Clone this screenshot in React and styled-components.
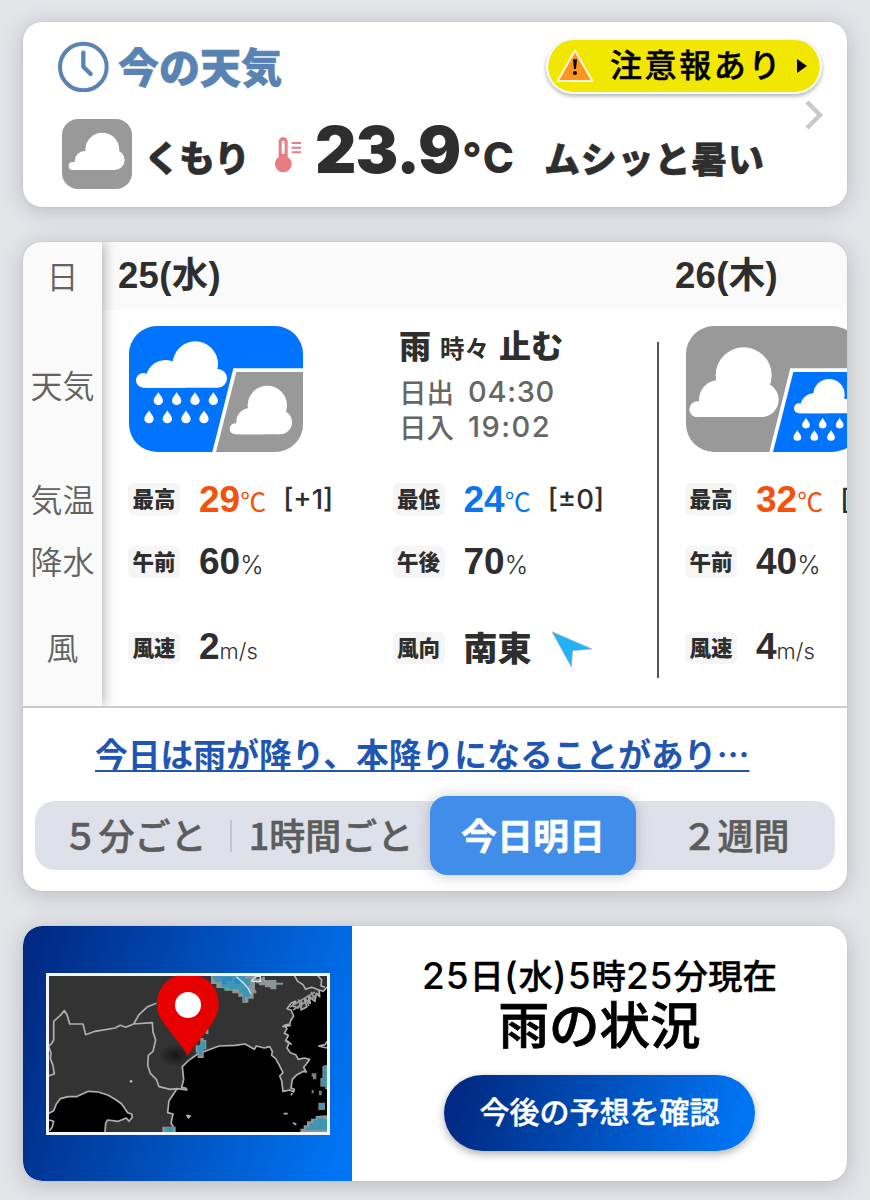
import React from "react";
import styled, { createGlobalStyle } from "styled-components";

const GlobalStyle = createGlobalStyle`
  * {
    box-sizing: border-box;
  }
  body {
    margin: 0;
    background-color: #e4e5e9;
    font-family: "Noto Sans CJK JP", sans-serif;
    color: #2e2e2e;
    line-height: 1;
  }
`;

const Page = styled.div`
  width: 870px;
  height: 1200px;
  padding: 22px 23px 0;
  display: flex;
  flex-direction: column;
  gap: 35px;
  overflow: hidden;
`;

const Card = styled.section`
  height: ${(props) => props.$height}px;
  flex-shrink: 0;
  background-color: white;
  border-radius: 19px;
  box-shadow: 0 3px 22px rgb(60 62 70 / 26%), 0 0 2px rgb(60 62 70 / 14%);
`;

/* current weather */

const NowTop = styled.div`
  height: 97px;
  padding: 18px 25px 0 35px;
  display: flex;
  align-items: flex-start;
`;

const NowTitle = styled.h1`
  margin: 5px 0 0 8px;
  flex: 1;
  font-size: 41px;
  font-weight: 900;
  line-height: 41px;
  color: #5983b3;
  -webkit-text-stroke: 0.6px #5983b3;
`;

const AlertButton = styled.button`
  width: 276px;
  height: 54px;
  padding: 0 13px 0 8px;
  display: flex;
  align-items: center;
  border: 2px solid white;
  border-top-width: 0;
  border-radius: 27px;
  background-color: #f2e700;
  background-clip: padding-box;
  box-shadow: 0 2px 4px rgb(0 0 0 / 32%);
  font-family: inherit;
  font-size: 32px;
  font-weight: 500;
  line-height: 1;
  letter-spacing: 2.6px;
  color: black;
  -webkit-text-stroke: 0.5px black;
`;

const AlertText = styled.span`
  margin: -6px 0 0 16px;
  flex: 1;
  text-align: left;
  white-space: nowrap;
`;

const NowBottom = styled.div`
  height: 70px;
  padding-left: 39px;
  display: flex;
  align-items: flex-start;
`;

const NowWord = styled.span`
  margin: ${(props) => props.$margin};
  font-size: 36px;
  font-weight: 900;
  letter-spacing: ${(props) => props.$spacing}px;
  white-space: nowrap;
  -webkit-text-stroke: 0.5px #2e2e2e;
`;

const NowTemp = styled.span`
  width: 232px;
  margin: -1px 0 0 13px;
  font-family: Inter, sans-serif;
  font-size: 64px;
  font-weight: 900;
  letter-spacing: -0.9px;
  white-space: nowrap;
  small {
    margin-left: 2px;
    font-size: 42px;
    font-weight: 800;
    letter-spacing: 2px;
  }
`;

const Thermometer = styled.svg`
  margin: 18px 0 0 26px;
`;

const Chevron = styled.svg`
  margin: -19px 23px 0 auto;
`;

/* forecast */

const Forecast = styled.div`
  height: 466px;
  display: flex;
  overflow: hidden;
  border-bottom: 2px solid #cbcbcb;
  border-radius: 19px 19px 0 0;
`;

const Labels = styled.div`
  width: 79px;
  flex-shrink: 0;
  position: relative;
  z-index: 1;
  background-color: #fafafa;
  box-shadow: 2px 0 12px rgb(0 0 0 / 30%);
`;

const Label = styled.div`
  height: ${(props) => props.$height}px;
  padding-bottom: ${(props) => props.$lift}px;
  display: flex;
  align-items: center;
  justify-content: center;
  font-size: 32px;
  font-weight: 350;
  color: #626262;
`;

const Days = styled.div`
  flex: 1;
  display: flex;
  overflow: hidden;
`;

const DayColumn = styled.div`
  width: 557px;
  flex-shrink: 0;
`;

const DayTitle = styled.h2`
  height: 68px;
  margin: 0;
  padding: 16px 0 0 16px;
  background-color: #fafafa;
  font-family: "Liberation Sans", "Noto Sans CJK JP", sans-serif;
  font-size: 36.5px;
  font-weight: 700;
  letter-spacing: 0.3px;
`;

const DayBody = styled.div`
  height: 396px;
  display: flex;
`;

const DayContent = styled.div`
  width: 555px;
  padding-left: 26px;
`;

const DayLine = styled.div`
  width: 2px;
  margin: 32px 0 28px;
  background-color: #555;
`;

const Overview = styled.div`
  height: 158px;
  padding: 16px 0 0 1px;
  display: flex;
`;

const Summary = styled.div`
  margin-left: 96px;
`;

const Telop = styled.div`
  height: 48px;
  padding-top: 2px;
  font-size: 32px;
  font-weight: 900;
  white-space: nowrap;
  small {
    margin: 0 10px 0 9px;
    font-size: 24.5px;
    font-weight: 700;
  }
`;

const SunTime = styled.div`
  height: 35px;
  display: flex;
  align-items: center;
  font-size: 27.5px;
  font-weight: 500;
  color: #666;
  span {
    margin-left: 14px;
    font-family: Inter, sans-serif;
    font-size: 29px;
    letter-spacing: ${(props) => props.$spacing}px;
  }
`;

const MetricRow = styled.div`
  height: ${(props) => props.$height}px;
  display: grid;
  grid-template-columns: 264.5px 264.5px;
  align-items: center;
`;

const Metric = styled.div`
  display: flex;
  align-items: center;
`;

const Badge = styled.span`
  width: 52px;
  height: 32px;
  padding-bottom: 2px;
  margin-right: 19px;
  display: flex;
  align-items: center;
  justify-content: center;
  border-radius: 6px;
  background-color: #f5f5f5;
  font-size: 21.5px;
  font-weight: 900;
`;

const Value = styled.span`
  padding-bottom: ${(props) => props.$lift || 0}px;
  font-family: "Liberation Sans", sans-serif;
  font-size: 37px;
  font-weight: 700;
  color: ${(props) => props.$color || "#2e2e2e"};
  white-space: nowrap;
`;

const Unit = styled.span`
  font-family: ${(props) => (props.$degree ? '"Noto Sans CJK JP"' : "Inter")}, sans-serif;
  font-size: ${(props) => props.$size || 22}px;
  font-weight: ${(props) => (props.$degree ? 400 : 300)};
`;

const Diff = styled.span`
  margin: 2px 0 0 17px;
  font-family: Inter, sans-serif;
  font-size: 27.5px;
  font-weight: 500;
`;

const Direction = styled.span`
  margin-right: 19px;
  padding-bottom: 2px;
  font-size: 34px;
  font-weight: 900;
  line-height: 38px;
`;

const Comment = styled.a`
  height: 93px;
  padding-top: 29px;
  display: block;
  margin-left: 72px;
  font-size: 32.7px;
  font-weight: 700;
  letter-spacing: 0.1px;
  color: #1f56b3;
  white-space: nowrap;
  text-decoration: underline;
  text-decoration-thickness: 2px;
  text-underline-offset: 3px;
`;

const Tabs = styled.nav`
  width: 800px;
  height: 69px;
  margin-left: 12px;
  display: grid;
  grid-template-columns: 195px 2px 198px 206px 199px;
  grid-template-rows: 69px;
  align-items: center;
  border-radius: 20px;
  background-color: #dfe1ea;
`;

const Tab = styled.button`
  height: ${(props) => (props.$active ? 79 : 69)}px;
  padding: 0 0 3px ${(props) => props.$shift || 0}px;
  border: none;
  border-radius: 17px;
  background-color: ${(props) => (props.$active ? "#418eea" : "transparent")};
  box-shadow: ${(props) => (props.$active ? "0 1px 14px rgb(60 70 90 / 30%)" : "none")};
  color: ${(props) => (props.$active ? "white" : "#5c5c5c")};
  font-family: inherit;
  font-size: 36px;
  font-weight: ${(props) => (props.$active ? 700 : 500)};
  -webkit-text-stroke: 0.5px currentColor;
  line-height: 1;
  white-space: nowrap;
`;

const TabLine = styled.i`
  width: 2px;
  height: 32px;
  background-color: #c3c5cc;
`;

/* rain map */

const RainCard = styled(Card)`
  display: flex;
  overflow: hidden;
`;

const MapPanel = styled.div`
  width: 329px;
  padding: 47px 0 0 23px;
  border-radius: 19px 0 0 19px;
  background: linear-gradient(105deg, #002a83 4%, #0075f4 96%);
`;

const MapFrame = styled.div`
  width: 284px;
  height: 162px;
  border: 3px solid #f2f6ff;
  svg {
    display: block;
  }
`;

const RainInfo = styled.div`
  flex: 1;
  display: flex;
  flex-direction: column;
  align-items: center;
`;

const RainTime = styled.p`
  height: 38px;
  margin: 29px 0 0;
  font-size: 34.5px;
  font-weight: 500;
  line-height: 38px;
  color: black;
  white-space: nowrap;
  -webkit-text-stroke: 0.3px black;
  span {
    font-family: Inter, sans-serif;
    font-size: 37px;
    letter-spacing: 0.9px;
    -webkit-text-stroke: 0;
  }
`;

const RainTitle = styled.h2`
  margin: 4px 0 0;
  font-size: 50.5px;
  font-weight: 500;
  line-height: 50px;
  color: black;
  -webkit-text-stroke: 0.8px black;
`;

const RainButton = styled.button`
  width: 311px;
  height: 76px;
  margin-top: 28px;
  padding-bottom: 8px;
  border: none;
  border-radius: 38px;
  background: linear-gradient(105deg, #002a83 6%, #0075f4 94%);
  box-shadow: 0 3px 9px rgb(0 0 0 / 32%);
  color: white;
  font-family: inherit;
  font-size: 30px;
  font-weight: 500;
  -webkit-text-stroke: 0.4px white;
`;

/* a cloud is a flat base with round bumps: [cx, cy, r] */
const Cloud = ({ bumps, bottom }) => {
  const first = bumps[0];
  const last = bumps[bumps.length - 1];
  return (
    <g fill="white">
      {bumps.map(([cx, cy, r]) =>
        cy + r > bottom + 1 ? (
          <path key={cx} d={`M${cx - r} ${bottom}V${cy}A${r} ${r} 0 0 1 ${cx + r} ${cy}V${bottom}Z`} />
        ) : (
          <circle key={cx} cx={cx} cy={cy} r={r} />
        )
      )}
      <path
        d={`M${first[0]} ${bottom} V${bottom - first[2] * 1.7} L${bumps[1][0]} ${bumps[1][1]} L${bumps[2][0]} ${bumps[2][1]} L${last[0]} ${last[1]} V${bottom} Z`}
      />
    </g>
  );
};

const Drops = ({ xs, y, scale = 1 }) =>
  xs.map((x) => (
    <path
      key={x}
      fill="white"
      transform={`translate(${x} ${y}) scale(${scale})`}
      d="M0 0C3 8 14 16 14 26A14 13 0 0 1-14 26C-14 16-3 8 0 0Z"
    />
  ));

const RainThenCloud = () => (
  <svg width="174" height="126" viewBox="0 0 522 378">
    <clipPath id="round1">
      <rect width="522" height="378" rx="84" />
    </clipPath>
    <g clipPath="url(#round1)">
      <rect width="522" height="378" fill="#0073ff" />
      <path d="M313 127H522V378H250Z" fill="white" />
      <path d="M322 138H522V378H261Z" fill="#999" />
      <Cloud bottom={185} bumps={[[43, 163, 22], [110, 162, 60], [199, 114, 68], [266, 157, 28]]} />
      <Drops xs={[88, 143, 198, 253]} y={198} />
      <Drops xs={[60, 115, 171, 225]} y={253} />
      <Cloud bottom={325} bumps={[[318, 308, 16], [364, 288, 42], [415, 238, 59], [453, 289, 36]]} />
    </g>
  </svg>
);

const CloudThenRain = () => (
  <svg width="174" height="126" viewBox="0 0 522 378">
    <clipPath id="round2">
      <rect width="522" height="378" rx="84" />
    </clipPath>
    <g clipPath="url(#round2)">
      <rect width="522" height="378" fill="#999" />
      <path d="M313 127H522V378H250Z" fill="white" />
      <path d="M322 138H522V378H261Z" fill="#0073ff" />
      <Cloud bottom={273} bumps={[[34, 250, 24], [99, 222, 60], [173, 148, 84], [226, 221, 52]]} />
      <Cloud bottom={262} bumps={[[339, 247, 15], [384, 243, 41], [429, 206, 47], [476, 240, 22]]} />
      <Drops xs={[360, 410, 461]} y={275} scale={0.83} />
      <Drops xs={[334, 385, 435]} y={312} scale={0.83} />
    </g>
  </svg>
);

const CloudIcon = () => (
  <svg width="70" height="70" viewBox="0 0 210 210">
    <rect width="210" height="210" rx="48" fill="#999" />
    <Cloud bottom={153} bumps={[[32, 141, 12], [68, 126, 30], [121, 92, 51], [158, 123, 30]]} />
  </svg>
);

const ClockIcon = () => (
  <svg width="52" height="52" viewBox="0 0 156 156" fill="none" stroke="#5983b3">
    <circle cx="76" cy="81" r="70" strokeWidth="12" />
    <path d="M76 38V80L98 102" strokeWidth="13" strokeLinecap="round" strokeLinejoin="round" />
  </svg>
);

const WarningIcon = () => (
  <svg width="38" height="34" viewBox="0 0 114 102">
    <path d="M57 5L109 96H5Z" fill="#ff951c" stroke="#fff6dd" strokeWidth="6" strokeLinejoin="round" />
    <path d="M51 31H63L60 60H54Z" fill="black" />
    <circle cx="57" cy="72" r="6" fill="black" />
  </svg>
);

const ThermometerIcon = () => (
  <Thermometer width="27" height="36" viewBox="0 0 81 108">
    <rect x="11" y="1" width="27" height="80" rx="13" fill="#e87c82" />
    <circle cx="25" cy="81" r="25" fill="#e87c82" />
    <rect x="20" y="11" width="9" height="40" rx="4" fill="white" />
    <path d="M50 18H78M50 32H78M50 46H78" stroke="#e87c82" strokeWidth="6" />
  </Thermometer>
);

const RainMap = () => (
  <svg width="278" height="156" viewBox="102 198 834 468">
    <defs>
      <radialGradient id="pinShadow">
        <stop offset="0" stopColor="black" stopOpacity="0.6" />
        <stop offset="1" stopColor="black" stopOpacity="0" />
      </radialGradient>
    </defs>
    <rect x="102" y="198" width="834" height="468" fill="#333" />
    <g stroke="#b0b0b0" strokeWidth="5" strokeLinejoin="round">
      <path
        fill="black"
        d="M470 670L474 648 468 640 474 612 458 608 462 572 478 548 486 536 516 540 512 534 500 532 506 508 502 470 520 452 548 432 580 420 612 408 660 406 690 402 718 418 724 408 748 414 764 410 772 424 770 436 782 446 792 464 804 488 794 498 800 512 804 544 824 540 836 546 838 538 828 534 832 508 846 494 866 484 874 486 866 472 874 462 884 448 868 444 850 448 842 434 826 428 816 414 822 400 812 392 820 376 808 370 816 356 808 346 824 342 828 330 836 318 828 300 816 296 828 280 842 274 832 288 850 294 860 276 858 300 876 290 868 268 886 280 880 258 900 274 904 250 914 260 912 240 924 244 940 228V670Z"
      />
      <path
        fill="black"
        d="M98 612L116 602 124 582 136 566 160 560 184 560 220 544 250 546 280 556 304 570 320 582 338 608 350 612 352 622 342 634 334 624 310 634 278 630 272 640 270 670H98Z"
      />
      <path
        fill="none"
        d="M98 412L110 400 116 390 116 334 136 316 148 302 156 314 164 342 204 342 212 374 240 364 300 354 316 346 332 352 356 342 412 338 414 366 422 390 414 424 400 436 398 466 406 490 424 508 432 530 466 538 486 536M356 342L372 314 398 290 424 280M102 412L108 430 106 446 114 466 118 492 98 498M838 196L848 214 864 224 872 238 890 232 912 240M906 194L920 210 918 228 930 232M102 630L116 634 112 650 104 662M802 350L828 346M816 392L830 404"
      />
      <path d="M516 616L526 618 520 624ZM832 550L828 556M806 611H818M834 638L844 644" fill="#bbb" />
      <path fill="none" stroke="#999" d="M824 292L900 246M834 300L912 250M850 268L862 300M870 262L882 288M888 246L902 272" />
    </g>
    <circle cx="348" cy="514" r="4" fill="#bbb" />
    <g fill="#8c9699">
      <path d="M588 198H724V216H720V240H724V250H716V266H700V278H682V260H670V250H652V242H628V234H604V222H588Z" />
      <path d="M722 206H740V200H750V210H784V218H804V224H784V238H766V232H750V226H732V220H722Z" />
      <path d="M572 358H580V372H572ZM542 406H556V384H566V390H574V418H566V444H548V428H542Z" />
      <path d="M936 464V538H930V530H916V504H922V468ZM890 490H904V508H894V500H890ZM890 540H896V550H890ZM912 542H920V556H912ZM910 578H930V600H910Z" fillOpacity="0.85" />
      <path d="M936 616V666H856V656H866V646H876V634H888V626H902V618ZM442 650H482V666H442Z" />
    </g>
    <path d="M936 394L930 404 910 408 936 414" fill="none" stroke="#b0b0b0" strokeWidth="5" />
    <g fill="#3c96b4">
      <path d="M594 198H690V206H706V226H700V240H706V262H690V272H684V250H672V238H640V230H620V216H600V208H594Z" />
      <path d="M548 408H560V394H570V416H562V438H552V424H548Z" />
      <path d="M936 474V526H922V508H928V474ZM912 582H926V596H912ZM936 626V660H872V652H884V640H896V630H908V624ZM450 652H474V666H450Z" />
    </g>
    <path d="M620 202H650V214H634V222H622ZM660 206H676V222H660Z" fill="#2e86c8" />
    <path d="M626 232H636V238H626ZM672 230H680V240H672Z" fill="#2fae8e" />
    <path d="M664 200L686 220 700 236 708 252M710 212L722 200 736 198 736 214H712Z" fill="none" stroke="#d9e6ea" strokeWidth="4" />
    <ellipse cx="482" cy="436" rx="52" ry="34" fill="url(#pinShadow)" />
    <path d="M518 438C506 412 480 384 454 350C436 328 426 306 426 284C426 226 466 192 518 192S611 226 611 284C611 306 600 328 584 350C560 384 532 412 518 438Z" fill="#e60000" />
    <circle cx="519" cy="285" r="39" fill="white" />
  </svg>
);

const WindArrow = () => (
  <svg width="42" height="42" viewBox="0 0 126 126">
    <path d="M3 14L123 66 65 71 61 120Z" fill="#1fb4f8" stroke="#b9a7ae" strokeWidth="2" />
  </svg>
);

const days = [
  {
    title: "25(水)",
    icon: <RainThenCloud />,
    telop: ["雨", "時々", "止む"],
    sunrise: "04:30",
    sunset: "19:02",
    high: "29",
    highDiff: "[+1]",
    low: "24",
    lowDiff: "[±0]",
    am: "60",
    pm: "70",
    speed: "2",
    direction: "南東",
  },
  {
    title: "26(木)",
    icon: <CloudThenRain />,
    high: "32",
    highDiff: "[",
    am: "40",
    speed: "4",
  },
];

const Day = ({ day }) => (
  <DayColumn>
    <DayTitle>{day.title}</DayTitle>
    <DayBody>
      <DayContent>
        <Overview>
          {day.icon}
          {day.telop && (
            <Summary>
              <Telop>
                {day.telop[0]}
                <small>{day.telop[1]}</small>
                {day.telop[2]}
              </Telop>
              <SunTime $spacing={0.7}>
                日出<span>{day.sunrise}</span>
              </SunTime>
              <SunTime $spacing={1.5}>
                日入<span>{day.sunset}</span>
              </SunTime>
            </Summary>
          )}
        </Overview>
        <MetricRow $height={62}>
          <Metric>
            <Badge>最高</Badge>
            <Value $color="#f4510b">
              {day.high}
              <Unit $degree $size={26}>℃</Unit>
            </Value>
            <Diff>{day.highDiff}</Diff>
          </Metric>
          {day.low && (
            <Metric>
              <Badge>最低</Badge>
              <Value $color="#0b76ec">
                {day.low}
                <Unit $degree $size={26}>℃</Unit>
              </Value>
              <Diff>{day.lowDiff}</Diff>
            </Metric>
          )}
        </MetricRow>
        <MetricRow $height={64}>
          <Metric>
            <Badge>午前</Badge>
            <Value $lift={2}>
              {day.am}
              <Unit $size={25}>%</Unit>
            </Value>
          </Metric>
          {day.pm && (
            <Metric>
              <Badge>午後</Badge>
              <Value $lift={2}>
                {day.pm}
                <Unit $size={25}>%</Unit>
              </Value>
            </Metric>
          )}
        </MetricRow>
        <MetricRow $height={108}>
          <Metric>
            <Badge>風速</Badge>
            <Value $lift={3}>
              {day.speed}
              <Unit>m/s</Unit>
            </Value>
          </Metric>
          {day.direction && (
            <Metric>
              <Badge>風向</Badge>
              <Direction>{day.direction}</Direction>
              <WindArrow />
            </Metric>
          )}
        </MetricRow>
      </DayContent>
      <DayLine />
    </DayBody>
  </DayColumn>
);

const App = () => {
  return (
    <Page>
      <GlobalStyle />
      <Card $height={185}>
        <NowTop>
          <ClockIcon />
          <NowTitle>今の天気</NowTitle>
          <AlertButton>
            <WarningIcon />
            <AlertText>注意報あり</AlertText>
            <svg width="10" height="14" viewBox="0 0 10 14">
              <path d="M0 0L10 7L0 14Z" fill="black" />
            </svg>
          </AlertButton>
        </NowTop>
        <NowBottom>
          <CloudIcon />
          <NowWord $margin="19px 0 0 12px" $spacing={-1}>
            くもり
          </NowWord>
          <ThermometerIcon />
          <NowTemp>
            23.9<small>°C</small>
          </NowTemp>
          <NowWord $margin="20px 0 0 -3px" $spacing={0.8}>
            ムシッと暑い
          </NowWord>
          <Chevron width="19" height="30" viewBox="0 0 19 30">
            <path d="M2 2L15 15L2 28" fill="none" stroke="#c7c8cc" strokeWidth="4.5" />
          </Chevron>
        </NowBottom>
      </Card>

      <Card $height={649}>
        <Forecast>
          <Labels>
            <Label $height={68} $lift={2}>日</Label>
            <Label $height={158} $lift={10}>天気</Label>
            <Label $height={62} $lift={2}>気温</Label>
            <Label $height={64} $lift={4}>降水</Label>
            <Label $height={108} $lift={4}>風</Label>
          </Labels>
          <Days>
            {days.map((day) => (
              <Day key={day.title} day={day} />
            ))}
          </Days>
        </Forecast>
        <Comment>今日は雨が降り、本降りになることがあり…</Comment>
        <Tabs>
          <Tab $shift={4}>５分ごと</Tab>
          <TabLine />
          <Tab>1時間ごと</Tab>
          <Tab $active>今日明日</Tab>
          <Tab>２週間</Tab>
        </Tabs>
      </Card>

      <RainCard $height={255}>
        <MapPanel>
          <MapFrame>
            <RainMap />
          </MapFrame>
        </MapPanel>
        <RainInfo>
          <RainTime>
            <span>25</span>日<span>(</span>水<span>)5</span>時<span>25</span>分現在
          </RainTime>
          <RainTitle>雨の状況</RainTitle>
          <RainButton>今後の予想を確認</RainButton>
        </RainInfo>
      </RainCard>
    </Page>
  );
};

export default App;
